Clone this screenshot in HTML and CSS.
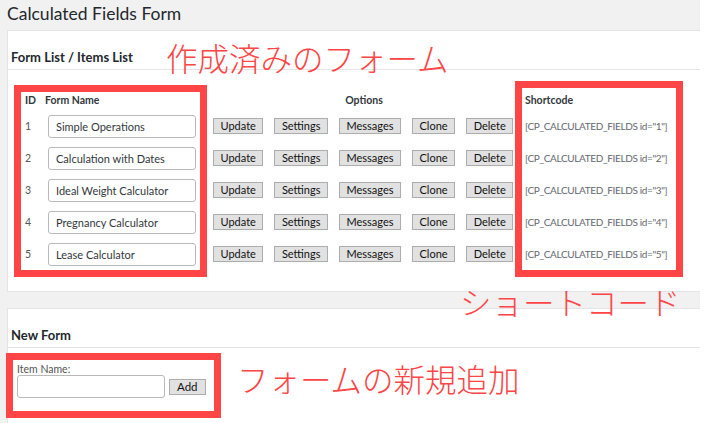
FILE: index.html
```html
<!DOCTYPE html>
<html lang="ja">
<head>
<meta charset="utf-8">
<title>Calculated Fields Form</title>
<link rel="stylesheet" href="styles.css">
</head>
<body>
<div class="page">
  <h1 class="title">Calculated Fields Form</h1>

  <section class="panel">
    <h2 class="panel-head">Form List / Items List</h2>
    <div class="list">
      <div class="hcell">ID</div>
      <div class="hcell">Form Name</div>
      <div class="hcell center">Options</div>
      <div class="hcell">Shortcode</div>

      <div class="cell id">1</div>
      <div class="cell"><input class="name" type="text" value="Simple Operations"></div>
      <div class="cell opts"><button>Update</button><button>Settings</button><button>Messages</button><button>Clone</button><button>Delete</button></div>
      <div class="cell code">[CP_CALCULATED_FIELDS id="1"]</div>

      <div class="cell id">2</div>
      <div class="cell"><input class="name" type="text" value="Calculation with Dates"></div>
      <div class="cell opts"><button>Update</button><button>Settings</button><button>Messages</button><button>Clone</button><button>Delete</button></div>
      <div class="cell code">[CP_CALCULATED_FIELDS id="2"]</div>

      <div class="cell id">3</div>
      <div class="cell"><input class="name" type="text" value="Ideal Weight Calculator"></div>
      <div class="cell opts"><button>Update</button><button>Settings</button><button>Messages</button><button>Clone</button><button>Delete</button></div>
      <div class="cell code">[CP_CALCULATED_FIELDS id="3"]</div>

      <div class="cell id">4</div>
      <div class="cell"><input class="name" type="text" value="Pregnancy Calculator"></div>
      <div class="cell opts"><button>Update</button><button>Settings</button><button>Messages</button><button>Clone</button><button>Delete</button></div>
      <div class="cell code">[CP_CALCULATED_FIELDS id="4"]</div>

      <div class="cell id">5</div>
      <div class="cell"><input class="name" type="text" value="Lease Calculator"></div>
      <div class="cell opts"><button>Update</button><button>Settings</button><button>Messages</button><button>Clone</button><button>Delete</button></div>
      <div class="cell code">[CP_CALCULATED_FIELDS id="5"]</div>
    </div>
  </section>

  <section class="panel panel-new">
    <h2 class="panel-head">New Form</h2>
    <div class="new-body">
      <label class="new-label" for="item">Item Name:</label>
      <div class="new-row">
        <input id="item" class="name" type="text">
        <button class="add">Add</button>
      </div>
    </div>
  </section>

  <div class="mark mark-list"></div>
  <div class="mark mark-code"></div>
  <div class="mark mark-new"></div>
  <div class="note note-list">作成済みのフォーム</div>
  <div class="note note-code">ショートコード</div>
  <div class="note note-new">フォームの新規追加</div>
</div>
</body>
</html>
```

FILE: styles.css
```css
html, body {
  margin: 0;
  padding: 0;
  background: #ffffff;
}
body {
  font-family: Lato, "Noto Sans", sans-serif;
  color: #23282d;
}
.page {
  position: relative;
  width: 700px;
  height: 423px;
  overflow: hidden;
  background: #f1f1f1;
  padding-left: 7px;
  box-sizing: border-box;
}
.title {
  margin: 0;
  height: 30px;
  font-size: 17.5px;
  font-weight: 400;
  line-height: 30px;
  position: relative;
  top: -1px;
  color: #23282d;
}
.panel {
  background: #fff;
  border: 1px solid #e2e4e7;
  border-right: 0;
}
.panel-new {
  margin-top: 16px;
  height: 200px;
}
.panel-head {
  margin: 0;
  padding: 18px 0 4px 3px;
  font-size: 13px;
  line-height: 16px;
  font-weight: 700;
  border-bottom: 1px solid #e2e4e7;
}
.list {
  display: grid;
  grid-template-columns: 20px 168px 312px auto;
  grid-template-rows: 20px repeat(5, 32px);
  padding: 20px 0 21px 17px;
}
.hcell {
  font-size: 10.5px;
  font-weight: 700;
  line-height: 20px;
  color: #32373c;
}
.center {
  text-align: center;
  padding-right: 10px;
}
.cell {
  display: flex;
  align-items: center;
}
.id {
  font-size: 10.5px;
  color: #555;
}
.name {
  box-sizing: border-box;
  width: 148px;
  height: 23px;
  margin: 0 0 0 3px;
  padding: 0 7px;
  border: 1px solid #b9b9b9;
  border-radius: 3px;
  font-family: inherit;
  font-size: 11px;
  color: #32373c;
  background: #fff;
  outline: none;
}
.opts {
  gap: 11px;
}
button {
  box-sizing: border-box;
  height: 16px;
  margin: 0;
  padding: 0 6.5px;
  border: 1px solid #adadad;
  border-radius: 0;
  background: #e1e1e1;
  font-family: inherit;
  font-size: 11px;
  line-height: 14px;
  color: #111;
  flex: none;
}
.code {
  font-size: 10px;
  letter-spacing: -0.35px;
  color: #646970;
  white-space: nowrap;
}
.new-body {
  padding: 15px 0 0 9px;
}
.new-label {
  display: block;
  font-size: 10.5px;
  line-height: 12px;
  color: #555;
}
.new-row {
  display: flex;
  align-items: center;
  gap: 4px;
}
.new-row .name {
  margin: 0;
}
.add {
  padding: 0 7px;
  font-size: 11.5px;
}
.mark {
  position: absolute;
  box-sizing: border-box;
  border: 7px solid #ff4545;
}
.mark-list { left: 14px; top: 85px; width: 193px; height: 192px; }
.mark-code { left: 515px; top: 81px; width: 168px; height: 196px; }
.mark-new { left: 6px; top: 353px; width: 215px; height: 65px; }
.note {
  position: absolute;
  font-family: "Noto Sans CJK JP", sans-serif;
  font-weight: 300;
  font-size: 31.5px;
  line-height: 36px;
  color: #ff4545;
  white-space: nowrap;
}
.note-list { left: 166px; top: 39px; }
.note-code { left: 460px; top: 283px; }
.note-new { left: 237px; top: 360px; }
```
